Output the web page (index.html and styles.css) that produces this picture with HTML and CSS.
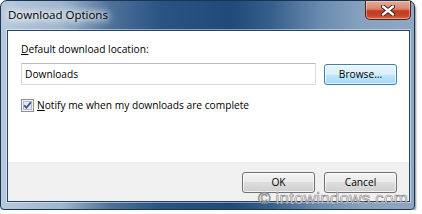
FILE: index.html
```html
<!DOCTYPE html>
<html>
<head>
<meta charset="utf-8">
<link rel="stylesheet" href="styles.css">
</head>
<body>
<div class="window">
  <div class="titlebar">
    <span class="title">Download Options</span>
    <div class="close">
      <svg width="14" height="11" viewBox="0 0 14 11">
        <path d="M2 1.5 L12 9.5 M12 1.5 L2 9.5" stroke="#3a1a14" stroke-width="4.2" stroke-linecap="round"/>
        <path d="M2 1.5 L12 9.5 M12 1.5 L2 9.5" stroke="#ffffff" stroke-width="2.4" stroke-linecap="round"/>
      </svg>
    </div>
  </div>
  <div class="client">
    <div class="content">
      <div class="label"><u>D</u>efault download location:</div>
      <div class="row">
        <div class="input">Downloads</div>
        <div class="btn btn-hot">Browse...</div>
      </div>
      <div class="check-row">
        <span class="checkbox">
          <svg width="13" height="13" viewBox="0 0 13 13">
            <rect x="0.5" y="0.5" width="12" height="12" fill="#f4f4f4" stroke="#8e8f8f"/>
            <rect x="2.5" y="2.5" width="8" height="8" fill="#e3e8f0" stroke="#b3bccb"/>
            <path d="M3.3 6.4 L5.4 8.8 L9.8 3.4" fill="none" stroke="#3c4f8c" stroke-width="1.7"/>
          </svg>
        </span>
        <span class="check-label"><u>N</u>otify me when my downloads are complete</span>
      </div>
    </div>
    <div class="footer">
      <div class="btn">OK</div>
      <div class="btn">Cancel</div>
    </div>
    <div class="watermark">© intowindows.com</div>
  </div>
</div>
</body>
</html>
```

FILE: styles.css
```css
html, body {
  margin: 0;
  padding: 0;
  background: #ffffff;
}

.window {
  width: 415px;
  height: 210px;
  box-sizing: border-box;
  border: 1px solid #1d3450;
  border-radius: 7px 7px 4px 4px;
  background:
    linear-gradient(90deg, #b7c9dc 0px, #9fb6cf 60px, #4d719a 110px, #2a5383 160px, #214979 230px, #375f8c 270px, #6a8bb0 320px, #86a2bf 360px, #8ea8c4 415px);
  box-shadow: 1px 2px 2px rgba(0,0,0,0.45);
  display: flex;
  flex-direction: column;
  font-family: "Open Sans", "Noto Sans", sans-serif;
  position: relative;
}

.titlebar {
  height: 29px;
  display: flex;
  align-items: flex-start;
  justify-content: space-between;
  padding-left: 7px;
  padding-right: 3px;
  flex-shrink: 0;
}

.title {
  font-size: 11.5px;
  line-height: 14px;
  margin-top: 7px;
  color: #000;
  text-shadow: 0 0 6px #fff, 0 0 8px #fff, 0 0 10px rgba(255,255,255,0.9), 0 0 12px rgba(255,255,255,0.8);
}

.close {
  width: 46px;
  height: 19px;
  box-sizing: border-box;
  border: 1px solid #5a1d12;
  border-top: none;
  border-radius: 0 0 5px 5px;
  background: linear-gradient(#e6ab9c 0%, #d8836e 45%, #c3391f 55%, #c74a2a 85%, #d8764f 100%);
  box-shadow: inset 0 0 0 1px rgba(255,255,255,0.35);
  display: flex;
  align-items: center;
  justify-content: center;
}

.client {
  flex: 1;
  margin: 0 4px 7px 6px;
  border: 1px solid #274567;
  box-shadow: 0 0 0 1px rgba(255,255,255,0.45);
  background: #f0f0f0;
  display: flex;
  flex-direction: column;
  position: relative;
  font-family: "Open Sans", "Noto Sans", sans-serif;
  font-size: 10px;
  color: #000;
}

.content {
  background: #ffffff;
  height: 131px;
  padding: 11px 12px 0 13px;
  box-sizing: border-box;
}

.label {
  line-height: 14px;
  font-size: 10.2px;
}

.row {
  display: flex;
  align-items: center;
  gap: 8px;
  margin-top: 6px;
}

.input {
  width: 295px;
  height: 22px;
  box-sizing: border-box;
  border: 1px solid #d7d9de;
  border-top-color: #b9bcc2;
  padding-left: 3px;
  line-height: 20px;
  font-size: 10.2px;
}

.btn {
  width: 73px;
  height: 21px;
  box-sizing: border-box;
  border: 1px solid #707070;
  border-radius: 3px;
  background: linear-gradient(#f2f2f2 0%, #ebebeb 50%, #dddddd 50%, #cfcfcf 100%);
  box-shadow: inset 0 0 0 1px rgba(255,255,255,0.7);
  text-align: center;
  line-height: 19px;
  font-size: 10.2px;
}

.btn-hot {
  margin-top: 2px;
  border-color: #3c7fb1;
  background: linear-gradient(#eaf6fd 0%, #d9f0fc 50%, #bee6fd 50%, #a7d9f5 100%);
}

.check-row {
  display: flex;
  align-items: center;
  gap: 3px;
  margin-top: 13px;
}

.checkbox {
  width: 13px;
  height: 13px;
  display: flex;
}

.check-label {
  line-height: 14px;
  font-size: 10.2px;
}

.footer {
  flex: 1;
  display: flex;
  justify-content: flex-end;
  align-items: flex-start;
  gap: 9px;
  padding: 10px 12px 0 0;
}

.watermark {
  position: absolute;
  right: 1px;
  bottom: -4px;
  line-height: 12px;
  font-family: "Liberation Sans", sans-serif;
  font-size: 17px;
  letter-spacing: 0.2px;
  color: rgba(255,255,255,0.8);
  -webkit-text-stroke: 0.7px rgba(120,120,120,0.85);
}
```
